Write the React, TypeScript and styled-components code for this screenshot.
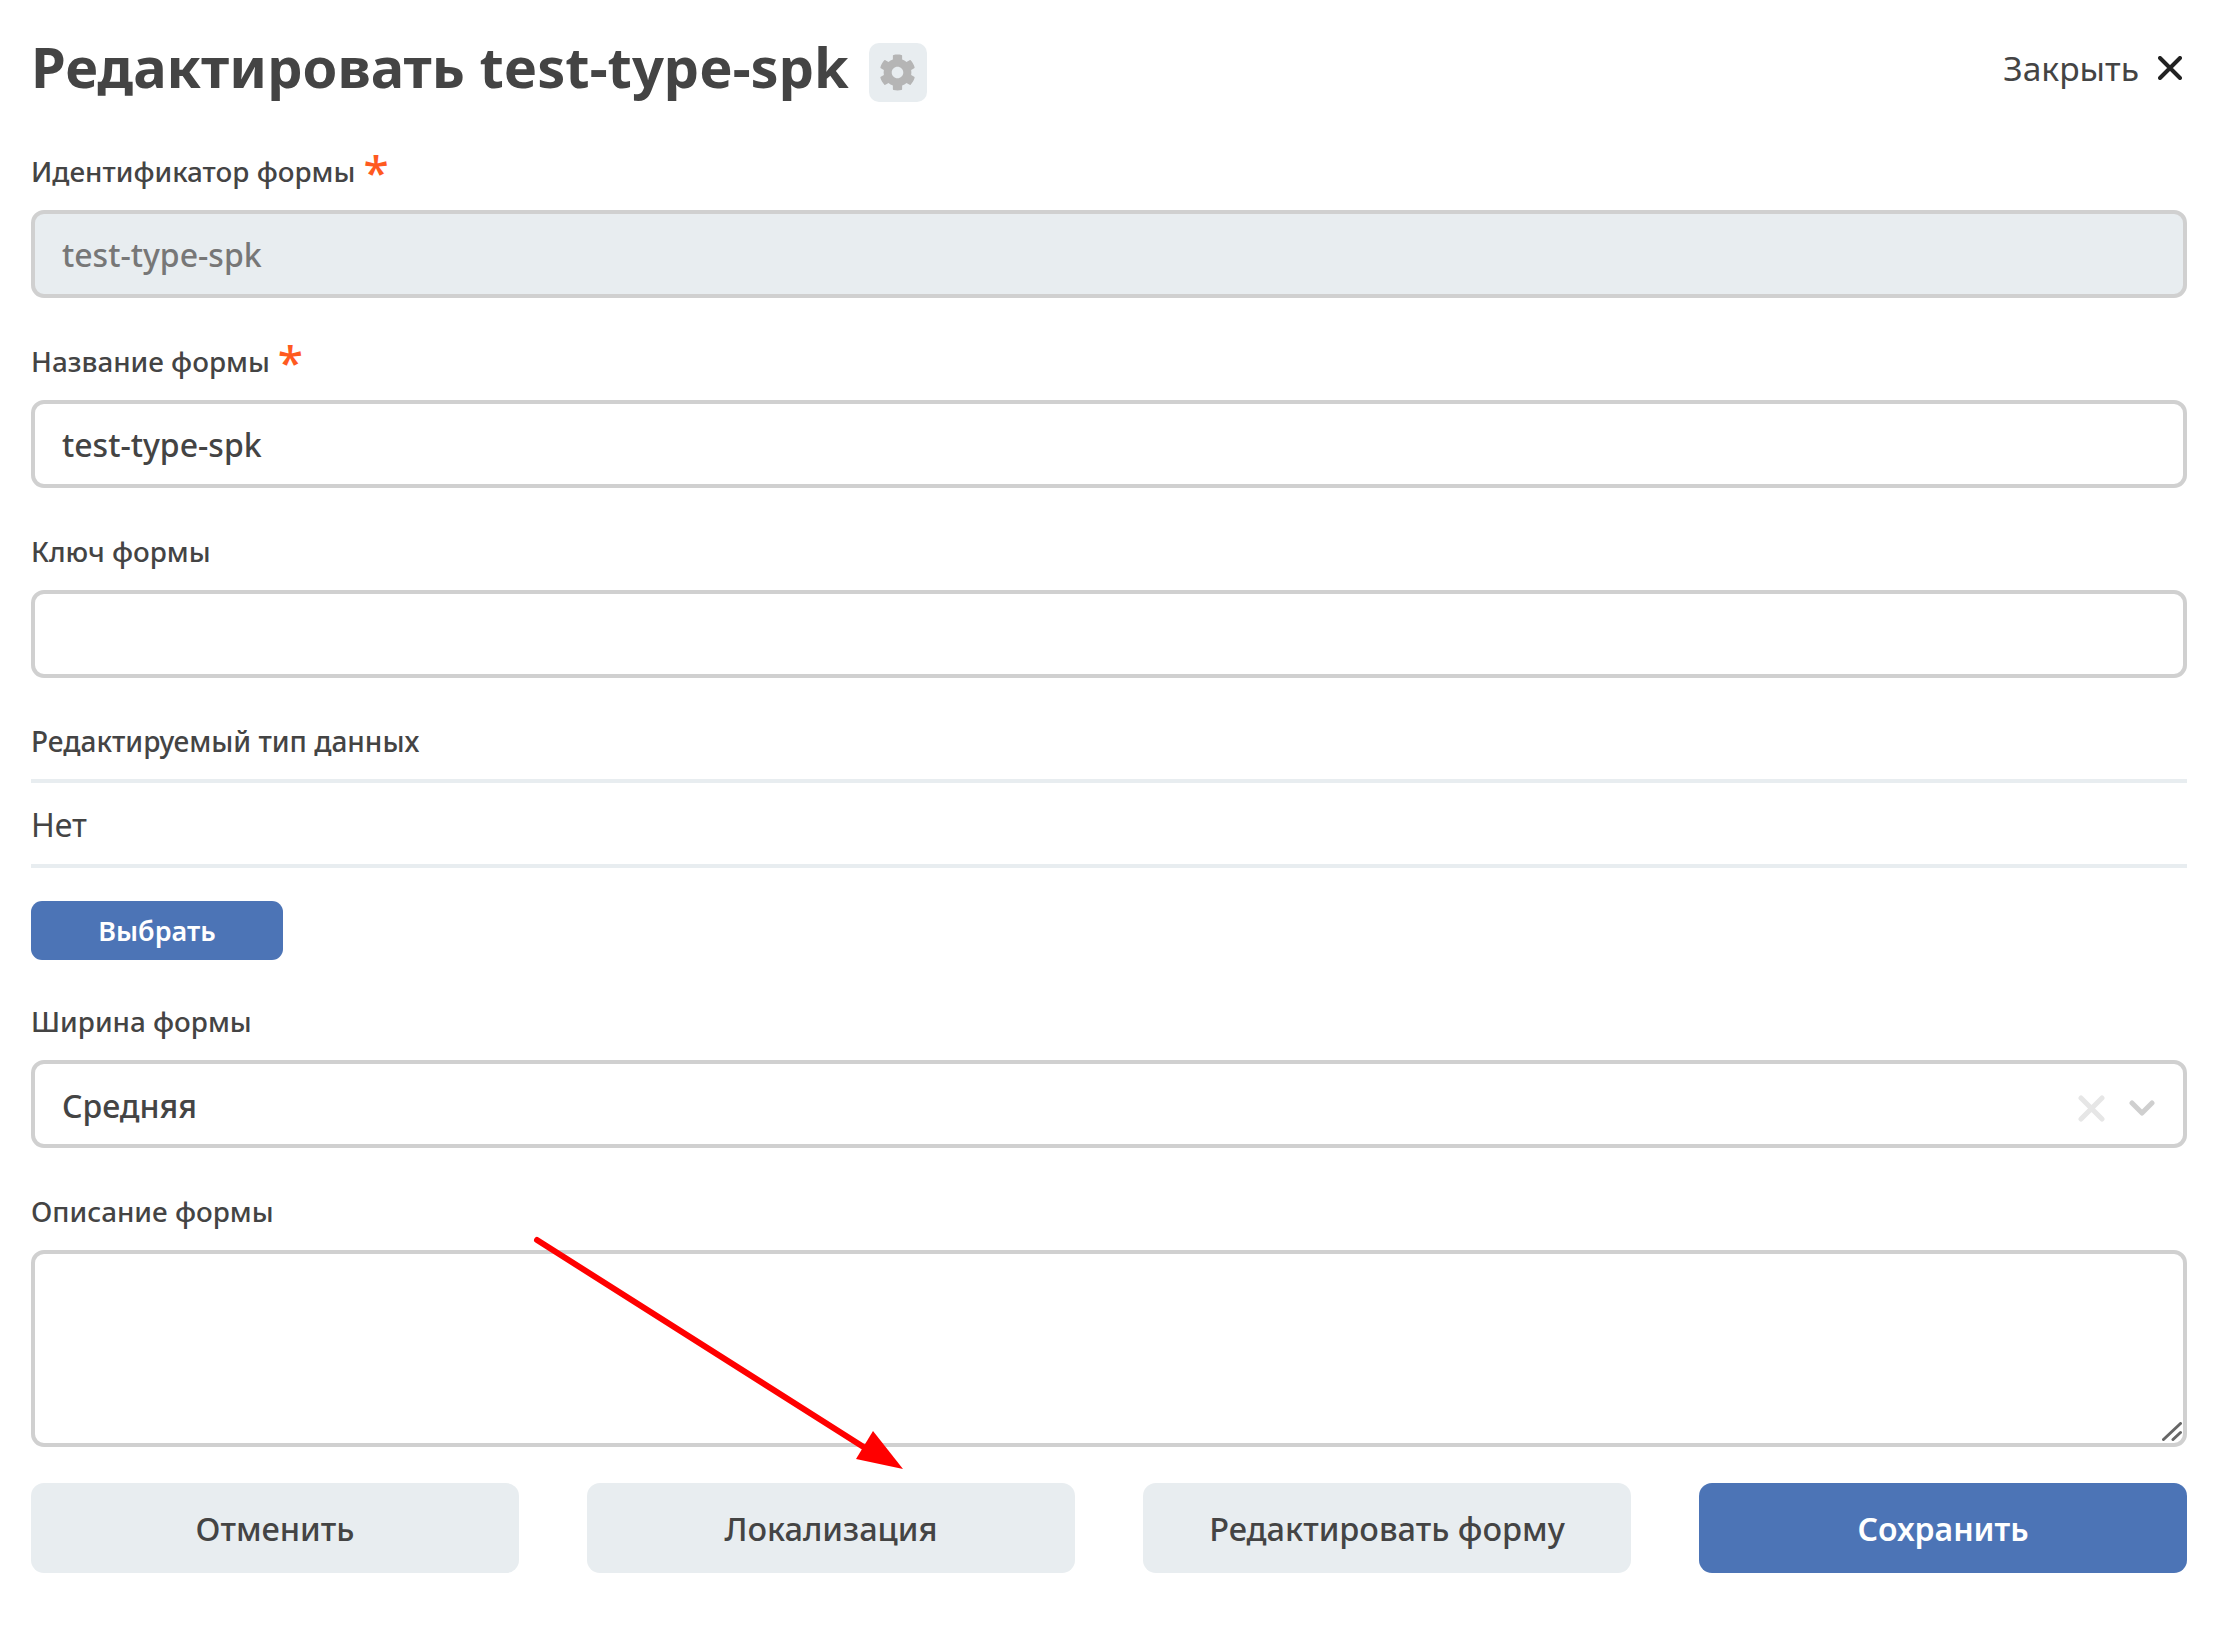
import React from "react"
import styled, { createGlobalStyle } from "styled-components"
import { FaCog } from "react-icons/fa"

const GlobalStyle = createGlobalStyle`
  html, body {
    margin: 0;
    padding: 0;
    background: #fff;
  }
  * {
    box-sizing: border-box;
  }
`

const Page = styled.div`
  position: relative;
  width: 2213px;
  height: 1628px;
  padding: 43px 26px 0 31px;
  font-family: "Noto Sans", "Open Sans", sans-serif;
  color: #444;
`

const Header = styled.div`
  display: flex;
  align-items: flex-start;
  justify-content: space-between;
  height: 59px;
  margin-bottom: 50px;
`

const TitleWrap = styled.div`
  display: flex;
  align-items: flex-start;
  gap: 20px;
`

const Title = styled.h1`
  margin: 0;
  font-size: 56px;
  font-weight: 700;
  line-height: 47px;
  color: #444;
`

const GearBadge = styled.div`
  width: 58px;
  height: 59px;
  border-radius: 10px;
  background: #e8edf0;
  color: #b5b5b5;
  display: flex;
  align-items: center;
  justify-content: center;
  font-size: 37px;
`

const Close = styled.div`
  display: flex;
  align-items: center;
  gap: 19px;
  height: 49px;
  font-size: 33.6px;
  padding-right: 5px;
`

const Field = styled.div`
  margin-bottom: 44px;
`

const Label = styled.div`
  height: 40px;
  line-height: 38px;
  margin-bottom: 18px;
  font-size: 27.8px;
  font-weight: 500;
  color: #444;
`

const Star = styled.span`
  color: #ff5a1f;
  font-size: 46px;
  font-weight: 500;
  line-height: 0;
  margin-left: 8px;
  vertical-align: -7px;
`

const Input = styled.input`
  display: block;
  width: 100%;
  height: 88px;
  padding: 0 27px;
  border: 4px solid #d0d0d0;
  border-radius: 13px;
  outline: none;
  font-family: inherit;
  font-size: 32px;
  font-weight: 500;
  color: #444;
  background: #fff;

  &:read-only[data-locked="true"] {
    background: #e8edf0;
    color: #777;
  }
`

const Select = styled.div`
  display: flex;
  align-items: center;
  justify-content: space-between;
  height: 88px;
  padding: 2px 28px 0 27px;
  border: 4px solid #d0d0d0;
  border-radius: 13px;
  font-size: 32px;
  font-weight: 500;
  color: #444;
`

const SelectIcons = styled.div`
  display: flex;
  align-items: center;
  gap: 24px;
  padding-top: 6px;
`

const TextAreaWrap = styled.div`
  position: relative;
  height: 197px;
`

const TextArea = styled.textarea`
  display: block;
  width: 100%;
  height: 100%;
  padding: 20px 27px;
  border: 4px solid #d0d0d0;
  border-radius: 13px;
  outline: none;
  resize: none;
  font-family: inherit;
  font-size: 32px;
  color: #444;
`

const Grip = styled.svg`
  position: absolute;
  right: 5px;
  bottom: 6px;
`

const TypeLabel = styled(Label)`
  margin-bottom: 17px;
  font-size: 28px;
`

const TypeValue = styled.div`
  height: 89px;
  line-height: 83px;
  border-top: 4px solid #e8edf0;
  border-bottom: 4px solid #e8edf0;
  font-size: 32px;
  color: #444;
`

const PickButton = styled.button`
  display: block;
  width: 252px;
  height: 59px;
  margin: 33px 0 42px;
  border: none;
  border-radius: 11px;
  background: #4c74b6;
  color: #fff;
  font-family: inherit;
  font-size: 27px;
  font-weight: 600;
`

const Actions = styled.div`
  display: grid;
  grid-template-columns: repeat(4, 488px);
  justify-content: space-between;
  margin-top: -8px;
`

const ActionButton = styled.button<{ $primary?: boolean }>`
  height: 90px;
  border: none;
  border-radius: 13px;
  background: ${({ $primary }) => ($primary ? "#4c74b6" : "#e8edf0")};
  color: ${({ $primary }) => ($primary ? "#fff" : "#444")};
  font-family: inherit;
  font-size: ${({ $primary }) => ($primary ? "32px" : "32.5px")};
  font-weight: ${({ $primary }) => ($primary ? 600 : 500)};
`

const ArrowOverlay = styled.svg`
  position: absolute;
  left: 0;
  top: 0;
  pointer-events: none;
`

function App() {
  return (
    <Page>
      <GlobalStyle />
      <Header>
        <TitleWrap>
          <Title>Редактировать test-type-spk</Title>
          <GearBadge>
            <FaCog />
          </GearBadge>
        </TitleWrap>
        <Close>
          Закрыть
          <svg width="24" height="24" viewBox="0 0 24 24">
            <path d="M2 2 L22 22 M22 2 L2 22" stroke="#222" strokeWidth="4" strokeLinecap="round" />
          </svg>
        </Close>
      </Header>

      <Field>
        <Label>
          Идентификатор формы<Star>*</Star>
        </Label>
        <Input data-locked="true" readOnly value="test-type-spk" />
      </Field>

      <Field>
        <Label>
          Название формы<Star>*</Star>
        </Label>
        <Input readOnly value="test-type-spk" />
      </Field>

      <Field>
        <Label>Ключ формы</Label>
        <Input readOnly value="" />
      </Field>

      <TypeLabel>Редактируемый тип данных</TypeLabel>
      <TypeValue>Нет</TypeValue>
      <PickButton>Выбрать</PickButton>

      <Field>
        <Label>Ширина формы</Label>
        <Select>
          Средняя
          <SelectIcons>
            <svg width="27" height="27" viewBox="0 0 27 27">
              <path d="M3 3 L24 24 M24 3 L3 24" stroke="#e6e6e6" strokeWidth="5" strokeLinecap="round" />
            </svg>
            <svg width="26" height="17" viewBox="0 0 26 17">
              <path d="M3 3 L13 13 L23 3" fill="none" stroke="#cfcfcf" strokeWidth="5" strokeLinecap="round" strokeLinejoin="round" />
            </svg>
          </SelectIcons>
        </Select>
      </Field>

      <Field>
        <Label>Описание формы</Label>
        <TextAreaWrap>
          <TextArea readOnly />
          <Grip width="20" height="19" viewBox="0 0 20 19">
            <path d="M1.5 17.5 L18.5 1.5 M11 17.5 L18.5 10.5" stroke="#666" strokeWidth="3" strokeLinecap="round" />
          </Grip>
        </TextAreaWrap>
      </Field>

      <Actions>
        <ActionButton>Отменить</ActionButton>
        <ActionButton>Локализация</ActionButton>
        <ActionButton>Редактировать форму</ActionButton>
        <ActionButton $primary>Сохранить</ActionButton>
      </Actions>

      <ArrowOverlay width="2213" height="1628">
        <path d="M537 1240 L873 1453" stroke="#ff0000" strokeWidth="6" strokeLinecap="round" />
        <polygon points="873,1431 903,1469 856,1459" fill="#ff0000" />
      </ArrowOverlay>
    </Page>
  )
}

export default App
